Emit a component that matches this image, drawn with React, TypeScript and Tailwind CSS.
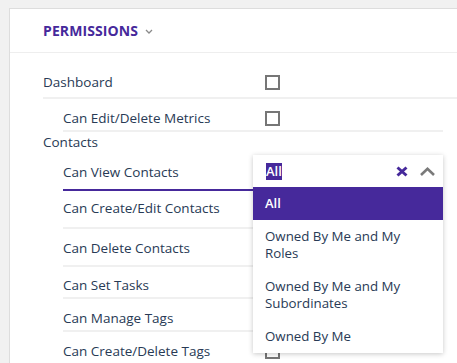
import React from "react";

const font = { fontFamily: '"Open Sans", "Liberation Sans", sans-serif' };

function Checkbox() {
  return <span className="block w-[15px] h-[15px] border-2 border-[#767676] bg-white" />;
}

type RowProps = {
  label: string;
  pt: string;
  h: string;
  border?: string;
  check?: boolean;
  children?: React.ReactNode;
};

function SubRow({ label, pt, h, border = "border-[#f0f0f0]", check, children }: RowProps) {
  return (
    <div className={`relative ml-[20px] w-[380px] border-b-2 ${border} ${h} ${pt}`}>
      <div className="flex items-center h-[18px]">
        <span className="w-[202px] shrink-0">{label}</span>
        {check && <Checkbox />}
      </div>
      {children}
    </div>
  );
}

function Dropdown() {
  const options = ["Owned By Me and My Roles", "Owned By Me and My Subordinates", "Owned By Me"];
  return (
    <div className="absolute left-[190px] top-[2px] w-[190px] bg-white shadow-[0_1px_5px_rgba(0,0,0,0.22)] z-10 text-[13px]">
      <div className="flex items-center h-[32px] pl-[13px] pr-[8px]">
        <span className="bg-[#46299b] text-white font-semibold leading-[17px]">All</span>
        <span className="ml-auto mr-[12px]">
          <svg width="12" height="11" viewBox="0 0 12 11">
            <path d="M1.5 1.5 L10.5 9.5 M10.5 1.5 L1.5 9.5" stroke="#46299b" strokeWidth="3" strokeLinecap="butt" />
          </svg>
        </span>
        <svg width="15" height="9" viewBox="0 0 15 9">
          <path d="M1 8 L7.5 1.8 L14 8" stroke="#7a7a7a" strokeWidth="2.6" fill="none" />
        </svg>
      </div>
      <div className="bg-[#46299b] text-white font-semibold px-[12px] py-[8px] leading-[17px]">All</div>
      {options.map((o) => (
        <div key={o} className="pl-[12px] pr-[36px] py-[8px] leading-[17px] text-[13.3px]">
          {o}
        </div>
      ))}
    </div>
  );
}

export default function App() {
  return (
    <div className="h-[363px] w-[457px] overflow-hidden bg-[#f1f1f1] pt-[8px] pl-[9px]" style={font}>
      <div className="w-[470px] h-[400px] bg-white border border-[#dddddd] text-[13.5px] text-[#283a55]">
        <div className="h-[44px] border-b border-[#eeeeee] pl-[33px] flex items-center">
          <span className="text-[14px] font-bold text-[#46299b] tracking-[0.1px]">PERMISSIONS</span>
          <svg className="ml-[7px] mt-[1px]" width="8" height="5" viewBox="0 0 8 5">
            <path d="M1 1 L4 4 L7 1" stroke="#8a8a8a" strokeWidth="1.3" fill="none" />
          </svg>
        </div>
        <div className="pl-[33px] pt-[13px]">
          <div className="w-[430px] h-[33px] pt-[7px] border-b-2 border-[#f0f0f0]">
            <div className="flex items-center h-[18px]">
              <span className="w-[222px] shrink-0">Dashboard</span>
              <Checkbox />
            </div>
          </div>
          <SubRow label="Can Edit/Delete Metrics" h="h-[33px]" pt="pt-[10px]" check />
          <div className="h-[21px] pt-[1px] leading-[18px]">Contacts</div>
          <SubRow label="Can View Contacts" h="h-[38px]" pt="pt-[10px]" border="border-[#46299b]">
            <Dropdown />
          </SubRow>
          <SubRow label="Can Create/Edit Contacts" h="h-[38px]" pt="pt-[8px]" />
          <SubRow label="Can Delete Contacts" h="h-[38px]" pt="pt-[10px]" />
          <SubRow label="Can Set Tasks" h="h-[32px]" pt="pt-[9px]" check />
          <SubRow label="Can Manage Tags" h="h-[33px]" pt="pt-[10px]" check />
          <SubRow label="Can Create/Delete Tags" h="h-[33px]" pt="pt-[10px]" check />
        </div>
      </div>
    </div>
  );
}
